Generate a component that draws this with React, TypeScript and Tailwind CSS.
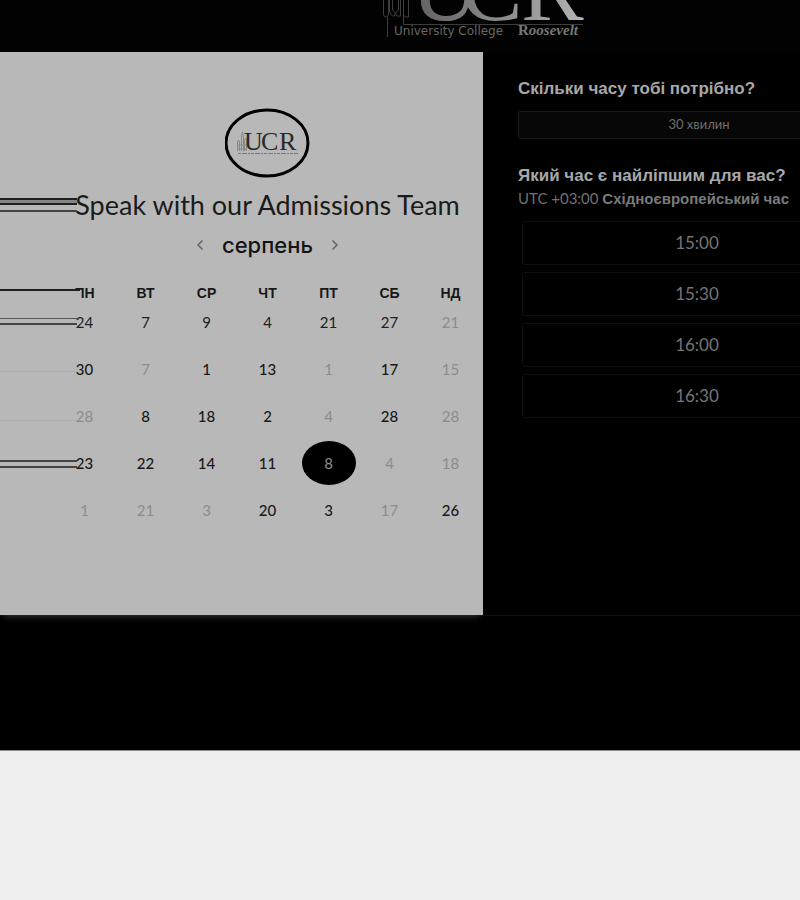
import { ChevronLeft, ChevronRight } from "lucide-react";

type Day = { n: number; tone: "normal" | "strong" | "muted" | "selected" };

const tones = {
  normal: "text-[#202020]",
  strong: "font-medium text-[#181818]",
  muted: "text-[#8c8c8c]",
  selected: "bg-black text-[#8f8f8f]",
};

const n = (v: number): Day => ({ n: v, tone: "normal" });
const s = (v: number): Day => ({ n: v, tone: "strong" });
const m = (v: number): Day => ({ n: v, tone: "muted" });

const weekdays = ["ПН", "ВТ", "СР", "ЧТ", "ПТ", "СБ", "НД"];
const weeks: Day[][] = [
  [n(24), n(7), n(9), n(4), n(21), n(27), m(21)],
  [s(30), m(7), s(1), s(13), m(1), s(17), m(15)],
  [m(28), s(8), s(18), s(2), m(4), s(28), m(28)],
  [s(23), s(22), s(14), s(11), { n: 8, tone: "selected" }, m(4), m(18)],
  [m(1), m(21), m(3), s(20), s(3), m(17), s(26)],
];
const times = ["15:00", "15:30", "16:00", "16:30"];

function HeaderLogo() {
  return (
    <svg className="ml-[380px] block h-[52px] w-[210px] shrink-0" viewBox="0 0 210 52" role="img" aria-label="University College Roosevelt">
      <defs>
        <linearGradient id="fade" gradientUnits="userSpaceOnUse" x1="36" y1="0" x2="204" y2="0">
          <stop offset="0" stopColor="#626262" />
          <stop offset="0.6" stopColor="#929292" />
          <stop offset="1" stopColor="#b4b4b4" />
        </linearGradient>
      </defs>
      <g fill="none" stroke="#3d3d3d" strokeWidth="1">
        <path d="M3.500 0V14q0 3 2.500 3t2.500-3V0M9.500 0V12l3 4h2l1-3 1 3h4V0M12.500 0V10l3 3 3-3V0M20.500 0V13M23.500 0V15l2 2h3V0M7.500 17V37M23.500 13V24.500H203" />
      </g>
      <g fill="url(#fade)" fontFamily="'Liberation Serif', serif" fontSize="94">
        <text x="31" y="20">U</text>
        <text x="80" y="20">C</text>
        <text x="141" y="20">R</text>
      </g>
      <text x="14" y="35" fill="#666" fontFamily="'DejaVu Sans', sans-serif" fontSize="12">University College</text>
      <text x="138" y="35" fill="#777" fontFamily="'Liberation Serif', serif" fontSize="15" fontWeight="700">
        R<tspan fontStyle="italic">oosevelt</tspan>
      </text>
    </svg>
  );
}

function BadgeLogo() {
  return (
    <svg className="block h-[70px] w-[86px]" viewBox="0 0 86 70" role="img" aria-label="UCR">
      <ellipse cx="42" cy="35" rx="41" ry="33" fill="none" stroke="#000" strokeWidth="3" />
      <path d="M12.500 43V34l1-2 1 2v9M16.500 43V29l1-5 1 5v14M19.500 43V32l1-2 1 2v11M12 37h10M12 41h10" fill="none" stroke="#888" strokeWidth="1" />
      <g fill="#292929" fontFamily="'Liberation Serif', serif" fontSize="26">
        <text x="19" y="42">U</text>
        <text x="36" y="42">C</text>
        <text x="54" y="42">R</text>
      </g>
      <path d="M13 45.500H73" stroke="#777" strokeWidth="1" strokeDasharray="3 1 5 1 2 1" />
    </svg>
  );
}

function EdgeLines() {
  return (
    <svg className="pointer-events-none absolute top-0 left-0 h-[563px] w-20" viewBox="0 0 80 563" aria-hidden="true">
      <rect y="147" width="77" height="5" fill="#858585" />
      <rect x="73" y="239" width="5" height="9" fill="#b8b8b8" />
      <g fill="#1f1f1f">
        <rect y="146" width="77" height="2" />
        <rect y="151" width="77" height="2" />
        <rect y="237" width="80" height="2" />
      </g>
      <g fill="#444">
        <rect y="158" width="77" height="2" />
        <rect y="271" width="77" height="2" />
        <rect y="408" width="77" height="2" />
        <rect y="414" width="77" height="2" />
      </g>
      <rect y="266" width="77" height="1" fill="#555" />
      <g fill="#acacac">
        <rect y="319" width="77" height="1" />
        <rect y="368" width="77" height="1" />
      </g>
    </svg>
  );
}

export default function App() {
  return (
    <div className="min-h-screen overflow-hidden bg-[#efefef] font-['Lato','Liberation_Sans',sans-serif]">
      <div className="border-b border-[#8b8b8b] bg-black pb-[134px]">
        <header className="flex bg-[#020202]">
          <HeaderLogo />
        </header>

        <main className="flex border-b border-[#111]">
          <section className="relative flex w-[483px] shrink-0 flex-col items-center bg-[#b8b8b8] pt-14 pr-0.5 pb-[82px] pl-[54px] shadow-[0_6px_6px_-4px_#2a2a2a]">
            <BadgeLogo />
            <h1 className="mt-[11px] text-[27px] leading-8 whitespace-nowrap text-[#1b1b1b]">Speak with our Admissions Team</h1>
            <div className="mt-2 flex h-8 items-center gap-3.5">
              <button type="button" aria-label="Попередній місяць" className="text-[#666]">
                <ChevronLeft size={16} strokeWidth={2.5} />
              </button>
              <h2 className="font-['Inter','Liberation_Sans',sans-serif] text-[22px] leading-8 font-medium text-[#141414]">серпень</h2>
              <button type="button" aria-label="Наступний місяць" className="text-[#666]">
                <ChevronRight size={16} strokeWidth={2.5} />
              </button>
            </div>

            <table className="mt-[27px] w-full table-fixed border-collapse text-center">
              <thead>
                <tr>
                  {weekdays.map((d) => (
                    <th key={d} scope="col" className="p-0 font-['Liberation_Sans',sans-serif] text-sm leading-[10px] font-bold text-[#181818]">
                      {d}
                    </th>
                  ))}
                </tr>
              </thead>
              <tbody>
                {weeks.map((week, i) => (
                  <tr key={i} className="h-[47px]">
                    {week.map((d, j) => (
                      <td key={j} className="p-0">
                        <button
                          type="button"
                          className={`mx-auto flex h-11 w-[54px] items-center justify-center rounded-[50%] text-[15px] leading-5 ${tones[d.tone]}`}
                        >
                          {d.n}
                        </button>
                      </td>
                    ))}
                  </tr>
                ))}
              </tbody>
            </table>
            <EdgeLines />
          </section>

          <section className="w-[397px] shrink-0 pt-[27px] pl-[35px]">
            <h3 className="font-['Liberation_Sans',sans-serif] text-[17px] leading-5 font-bold text-[#a8a8a8]">Скільки часу тобі потрібно?</h3>
            <button
              type="button"
              className="mt-3 block h-7 w-full rounded-xs border border-[#191919] bg-[#070707] font-['Lato','Liberation_Sans',sans-serif] text-[13px] text-[#707070]"
            >
              30 хвилин
            </button>
            <h3 className="mt-[27px] font-['Liberation_Sans',sans-serif] text-[17px] leading-5 font-bold text-[#a8a8a8]">Який час є найліпшим для вас?</h3>
            <p className="mt-0.5 text-[15px] leading-5 whitespace-nowrap text-[#707070]">
              UTC +03:00 <b className="font-['Liberation_Sans',sans-serif] text-[#7a7a7a]">Східноєвропейський час</b>
            </p>
            <div className="mt-3 mr-2 ml-1 flex flex-col gap-[7px]">
              {times.map((t) => (
                <button key={t} type="button" className="h-11 rounded-xs border border-[#0e0e0e] text-[17px] text-[#757575]">
                  {t}
                </button>
              ))}
            </div>
          </section>
        </main>
      </div>
    </div>
  );
}
